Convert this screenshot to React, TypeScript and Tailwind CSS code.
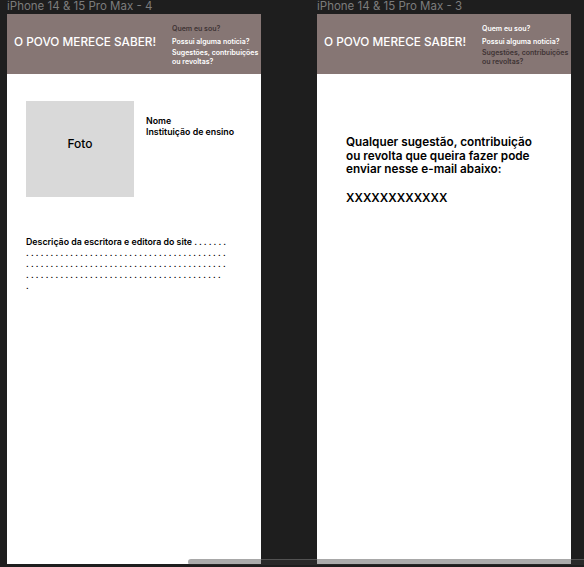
import React from "react";

const dots = (n: number) => Array.from({ length: n }, () => ".").join(" ");

function Header({ variant }: { variant: 1 | 2 }) {
  const dark = "text-[#3f3434]";
  const light = "text-white";
  return (
    <div className="h-[60px] bg-[#867674] flex items-start shrink-0">
      <div className="w-[165px] shrink-0 pl-[7px] pt-[20px] text-[11.8px] leading-[16px] font-medium text-white whitespace-nowrap">
        O POVO MERECE SABER!
      </div>
      <div className="flex flex-col pt-[10px] text-[7px] leading-[9px] font-semibold whitespace-nowrap">
        <div className={variant === 1 ? dark : light}>Quem eu sou?</div>
        <div className={`mt-[4px] ${light}`}>Possui alguma notícia?</div>
        <div className={`mt-[2px] ${variant === 1 ? light : dark}`}>
          Sugestões, contribuições
          <br />
          ou revoltas?
        </div>
      </div>
    </div>
  );
}

function FrameLabel({ text }: { text: string }) {
  return (
    <div className="h-[14px] text-[11.5px] leading-[12px] text-[#7c7c7c] whitespace-nowrap -mt-[1px]">
      {text}
    </div>
  );
}

export default function App() {
  return (
    <div
      className="w-[584px] h-[567px] bg-[#1e1e1e] relative overflow-hidden"
      style={{ fontFamily: "Inter, 'Noto Sans', sans-serif" }}
    >
      <div className="flex pl-[7px] gap-[56px] pt-[1px]">
        {/* Frame 4 */}
        <div className="w-[254px] flex flex-col">
          <FrameLabel text="iPhone 14 & 15 Pro Max - 4" />
          <div className="h-[550px] bg-white flex flex-col">
            <Header variant={1} />
            <div className="flex pl-[19px] pt-[27px]">
              <div className="w-[108px] h-[96px] bg-[#d9d9d9] flex items-center justify-center pb-[10px] text-[12px] font-medium text-black">
                Foto
              </div>
              <div className="ml-[12px] mt-[15px] text-[8.8px] leading-[10.5px] font-semibold text-black">
                <div>Nome</div>
                <div>Instituição de ensino</div>
              </div>
            </div>
            <div className="pl-[19px] mt-[39px] text-[8.8px] leading-[11px] font-semibold text-black whitespace-nowrap">
              <div>Descrição da escritora e editora do site {dots(7)}</div>
              <div className="font-medium">{dots(41)}</div>
              <div className="font-medium">{dots(41)}</div>
              <div className="font-medium">{dots(40)}</div>
              <div className="font-medium">.</div>
            </div>
          </div>
        </div>
        {/* Frame 3 */}
        <div className="w-[254px] flex flex-col">
          <FrameLabel text="iPhone 14 & 15 Pro Max - 3" />
          <div className="h-[550px] bg-white flex flex-col">
            <Header variant={2} />
            <div className="pl-[29px] pt-[62px] text-[11.75px] leading-[13.5px] font-semibold text-black">
              <div>
                Qualquer sugestão, contribuição
                <br />
                ou revolta que queira fazer pode
                <br />
                enviar nesse e-mail abaixo:
              </div>
              <div className="mt-[15.5px]">XXXXXXXXXXXX</div>
            </div>
          </div>
        </div>
      </div>
      {/* canvas scrollbar */}
      <div className="absolute left-[188px] right-0 top-[559px] h-[6px] rounded-l-full bg-[rgba(58,58,58,0.42)] border-t border-[rgba(160,160,160,0.35)]" />
    </div>
  );
}
